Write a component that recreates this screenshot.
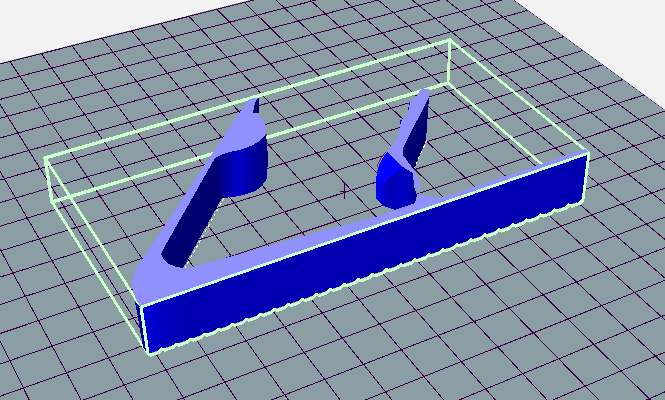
const O = [394.7, 286.7];
const VA = [3270, -760];
const VB = [-550, -775];
const G = 0.012278;
const K = -0.02197;
function H(u: number, v: number) {
  const a = G * u, b = K * v, w = 1 + a + b;
  return [(O[0] + a * VA[0] + b * VB[0]) / w, (O[1] + a * VA[1] + b * VB[1]) / w];
}
const us = Array.from({ length: 38 }, (_, i) => i - 26);
const vs = Array.from({ length: 34 }, (_, i) => i - 15);

function jag(x0: number, y0: number, x1: number, y1: number, n: number) {
  const pts: string[] = [];
  const dx = (x1 - x0) / n, dy = (y1 - y0) / n;
  for (let i = 0; i < n; i++) {
    const x = x0 + dx * i, y = y0 + dy * i;
    pts.push(`${x.toFixed(1)},${y.toFixed(1)}`);
    pts.push(`${(x + dx * 0.2).toFixed(1)},${(y + dy * 0.2 + 2.2).toFixed(1)}`);
    pts.push(`${(x + dx * 0.75).toFixed(1)},${(y + dy * 0.75 + 2.2).toFixed(1)}`);
  }
  pts.push(`${x1},${y1}`);
  return pts.join(" ");
}

const GREEN = "#ccffcc";
const PURPLE = "#9090ff";
const DARK = "#000070";

export default function App() {
  return (
    <div className="w-[665px] h-[400px] bg-[#f2f2f2] overflow-hidden">
      <svg width="665" height="400" viewBox="0 0 665 400" shapeRendering="crispEdges" className="block">
        <defs>
          <clipPath id="floor">
            <polygon points="0,63 250,0 514,0 665,110 665,400 0,400" />
          </clipPath>
          <linearGradient id="cyl" gradientUnits="userSpaceOnUse" x1="215" y1="0" x2="268" y2="0">
            <stop offset="0" stopColor="#000070" />
            <stop offset="0.15" stopColor="#000090" />
            <stop offset="0.42" stopColor="#0000c8" />
            <stop offset="0.7" stopColor="#0000a0" />
            <stop offset="1" stopColor="#000080" />
          </linearGradient>
          <linearGradient id="front" gradientUnits="userSpaceOnUse" x1="141" y1="0" x2="190" y2="0">
            <stop offset="0" stopColor="#0000d8" />
            <stop offset="0.5" stopColor="#0000c0" />
            <stop offset="1" stopColor="#0000b0" />
          </linearGradient>
          <linearGradient id="body" gradientUnits="userSpaceOnUse" x1="376" y1="0" x2="414" y2="0">
            <stop offset="0" stopColor="#0000f0" />
            <stop offset="0.35" stopColor="#0000b0" />
            <stop offset="0.75" stopColor="#0000c8" />
            <stop offset="1" stopColor="#0000a0" />
          </linearGradient>
        </defs>

        <polygon points="0,63 250,0 514,0 665,110 665,400 0,400" fill="#8a9ea3" />
        <g clipPath="url(#floor)" stroke="#3e0048" strokeWidth="1" fill="none">
          {us.map((u) => {
            const [a, b] = H(u, -15);
            const [c, d] = H(u, 18);
            return <line key={`u${u}`} x1={a} y1={b} x2={c} y2={d} />;
          })}
          {vs.map((v) => {
            const [a, b] = H(-26, v);
            const [c, d] = H(11, v);
            return <line key={`v${v}`} x1={a} y1={b} x2={c} y2={d} />;
          })}
        </g>
        <g stroke="#3e0048" strokeWidth="1" fill="none">
          <line x1="344" y1="184" x2="344" y2="199" />
          <line x1="340" y1="192" x2="349" y2="191" />
        </g>

        {/* box: far edges */}
        <g stroke={GREEN} fill="none" strokeLinecap="round">
          <line x1="45" y1="158" x2="450" y2="40" strokeWidth="3.4" />
          <line x1="52" y1="202" x2="448" y2="83" strokeWidth="3.4" />
          <line x1="450" y1="40" x2="448" y2="83" strokeWidth="2.8" />
          <line x1="450" y1="40" x2="589" y2="153" strokeWidth="2.6" />
          <line x1="448" y1="83" x2="583" y2="200" strokeWidth="2.6" />
          <line x1="45" y1="158" x2="52" y2="202" strokeWidth="3.4" />
          <line x1="45" y1="158" x2="141" y2="307" strokeWidth="2.8" />
          <line x1="52" y1="202" x2="148" y2="354" strokeWidth="2.8" />
        </g>

        {/* left arm: dark inner wall and cylinder */}
        <path d="M215,158 L222,198 L183,268 Q165,266 161,254 L165,246 Z" fill={DARK} />
        <polygon points="253,103 259,98 259,113 253,113" fill={DARK} />
        <path d="M215,158 Q222,153 240,150 Q262,143 266,133 L268,157 L267,178 Q262,188 253,192 Q240,197 222,198 Z" fill="url(#cyl)" />
        <line x1="266" y1="134" x2="266" y2="136" stroke="#8a2050" strokeWidth="1.4" />

        {/* right arm dark wall and body */}
        <polygon points="429,97 426,140 414,170 403,155 403,148" fill={DARK} />
        <polygon points="409,102 412,102 411,112 408,112" fill="#0000d0" />
        <polygon points="400,120 403,120 403,131 400,131" fill="#0000d0" />
        <path d="M376,183 L383,183 L403,167 L413,173 L414,187 L417,195 L415,203 L412,204 L395,210 L383,206 L376,199 Z" fill="url(#body)" />
        <path d="M387,152 L403,167 L383,183 L376,183 Q376,170 382,159 Z" fill="#0000ff" />
        <path d="M386,152 Q380,158 377,167" stroke="#8a2050" strokeWidth="1" fill="none" />

        {/* top face */}
        <path
          d="M248,100 Q251,98 258,98 L255,103 L253,113 Q266,116 266,133 Q262,143 240,150 Q222,153 215,158 L165,246 L161,254 Q165,266 183,268 Q190,268 200,265 L333,228 L367,219 L376,217 L395,210 L415,203 L419,194 L421,188 L420,183 L414,170 L403,155 L403,148 L429,97 L429,89 L421,89 L418,94 L410,103 L408,113 L401,122 L398,137 L387,152 L403,167 L413,173 L414,187 L418,187 L420,193 L418,195 L442,198 L530,168 L585,149 L589,153 L141,307 Q133,296 132,285 Q132,272 143,258 Z"
          fill={PURPLE}
        />

        {/* front faces */}
        <polygon points="141,307 589,153 583,200 148,354" fill="url(#front)" />
        <polygon points="135,302 141,307 148,354 143,347 138,318" fill="#000090" />

        {/* speckled edges */}
        <g stroke="#ffffff" strokeWidth="1" fill="none" strokeDasharray="3 3">
          <line x1="224" y1="198" x2="185" y2="268" />
          <line x1="427" y1="140" x2="414" y2="168" />
        </g>

        {/* box: near edges */}
        <g stroke={GREEN} fill="none" strokeLinecap="round">
          <line x1="141" y1="307" x2="589" y2="153" strokeWidth="2.8" />
          <line x1="141" y1="307" x2="148" y2="354" strokeWidth="3.2" />
          <line x1="589" y1="153" x2="583" y2="200" strokeWidth="2.8" />
          <polyline points={jag(148, 354, 583, 200, 31)} strokeWidth="3" strokeLinecap="butt" />
        </g>
      </svg>
    </div>
  );
}
